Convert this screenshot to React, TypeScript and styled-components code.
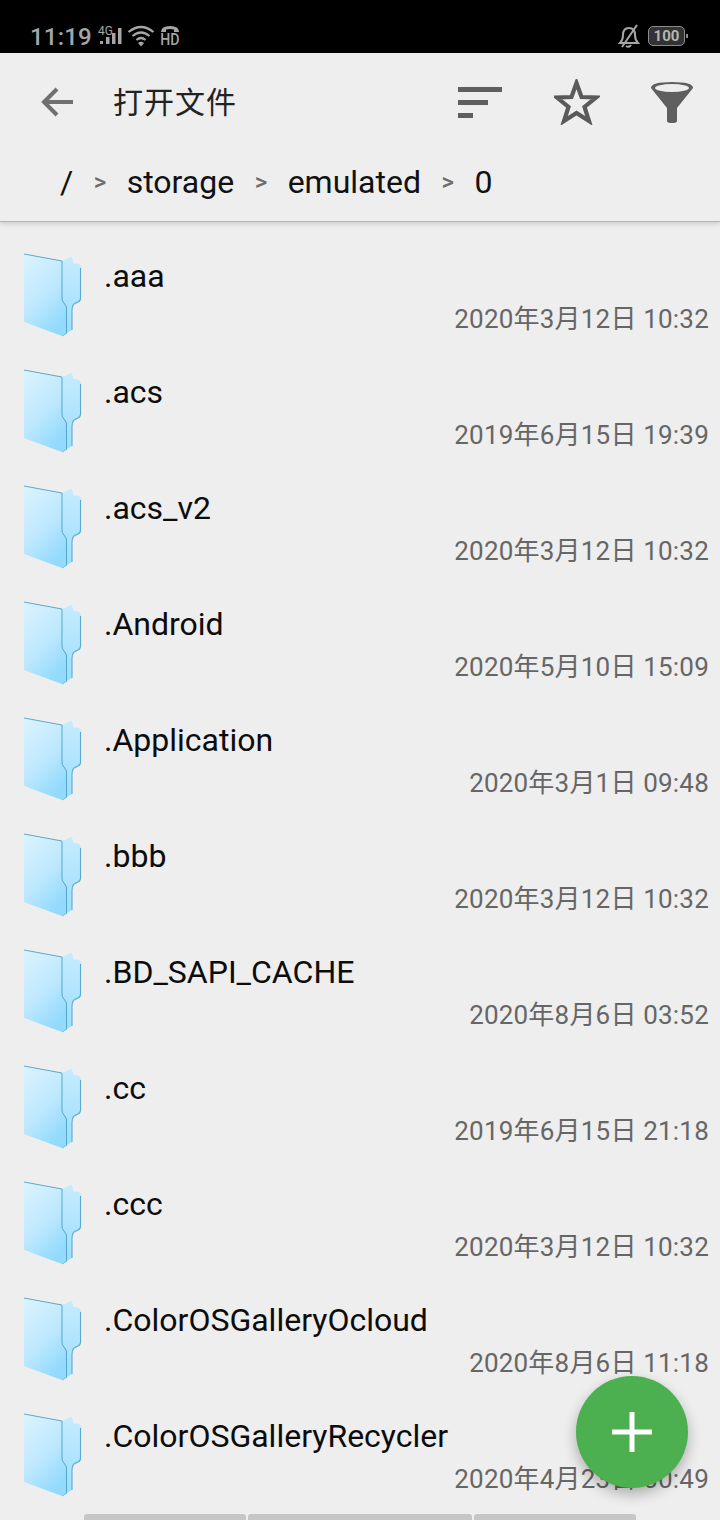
import styled, {createGlobalStyle} from "styled-components";

const GlobalStyle = createGlobalStyle`
    html, body {
        margin: 0;
        padding: 0;
        background: #eeeeee;
    }
    body {
        font-family: Roboto, "Noto Sans CJK SC", sans-serif;
    }
`;

const Page = styled.div`
    position: relative;
    width: 720px;
    height: 1520px;
    overflow: hidden;
    background: #eeeeee;
`;

const StatusBar = styled.div`
    height: 53px;
    background: #000;
    color: #a6a6a6;
    display: flex;
    align-items: flex-end;
    padding: 0 35px 5px 30px;
    box-sizing: border-box;
`;

const Clock = styled.span`
    font-size: 24px;
    font-weight: 500;
    line-height: 28px;
    letter-spacing: 0.2px;
    margin-bottom: -3px;
`;

const NetworkGroup = styled.div`
    display: flex;
    align-items: center;
    height: 24px;
    margin-left: 6px;
    gap: 5px;
`;

const Signal = styled.div`
    position: relative;
    width: 24px;
    height: 24px;
`;

const SignalLabel = styled.span`
    position: absolute;
    left: 0;
    top: 1px;
    font-size: 12px;
    line-height: 12px;
`;

const Call = styled.div`
    display: flex;
    flex-direction: column;
    align-items: center;
    width: 20px;
`;

const CallLabel = styled.span`
    font-size: 16px;
    font-weight: 500;
    line-height: 14px;
    transform: scaleX(0.88);
`;

const StatusRight = styled.div`
    margin-left: auto;
    display: flex;
    align-items: center;
    height: 24px;
    gap: 8px;
`;

const Battery = styled.div`
    position: relative;
    width: 37px;
    height: 20px;
    box-sizing: border-box;
    border: 1px solid #8c8c8c;
    border-radius: 5px;
    background: #333;
    color: #b5b5b5;
    font-size: 15px;
    font-weight: 700;
    line-height: 18px;
    text-align: center;

    &::after {
        content: "";
        position: absolute;
        right: -4px;
        top: 7px;
        width: 2px;
        height: 4px;
        background: #8c8c8c;
    }
`;

const AppBar = styled.header`
    position: relative;
    background: #eeeeee;
    border-bottom: 1px solid #b4b4b4;
    box-shadow: 0 2px 5px rgba(0, 0, 0, 0.14);
`;

const Toolbar = styled.div`
    height: 97px;
    display: flex;
    align-items: center;
    padding: 0 26px 0 38px;
`;

const BackIcon = styled.svg`
    width: 36px;
    height: 34px;
    flex: none;
`;

const Title = styled.h1`
    margin: 0 0 4px 39px;
    font-size: 30px;
    font-weight: 400;
    color: #222;
    letter-spacing: 1px;
`;

const Actions = styled.div`
    margin-left: auto;
    display: flex;
    align-items: center;
    gap: 50px;
`;

const ActionIcon = styled.svg<{$w: number}>`
    width: ${(p) => p.$w}px;
    height: 46px;
    display: block;
`;

const Breadcrumb = styled.nav`
    height: 71px;
    display: flex;
    align-items: center;
    padding: 0 0 7px 60px;
    box-sizing: border-box;
    font-size: 32px;
    color: #111;
`;

const Separator = styled.span`
    font-size: 24px;
    font-weight: 500;
    color: #6e6e6e;
    margin: 0 20.500px;
`;

const List = styled.ul`
    list-style: none;
    margin: 0;
    padding: 0;
`;

const Row = styled.li`
    height: 116px;
    display: flex;
    padding: 0 11px 0 22px;
    box-sizing: border-box;
`;

const FolderIcon = styled.svg`
    width: 60px;
    height: 86px;
    margin-top: 30px;
    flex: none;
`;

const RowText = styled.div`
    flex: 1;
    display: flex;
    flex-direction: column;
    margin-left: 22px;
    padding-top: 35px;
`;

const Name = styled.div`
    font-size: 32px;
    line-height: 38px;
    color: #0c0c0c;
`;

const Modified = styled.div`
    align-self: flex-end;
    margin-top: 7px;
    font-size: 26px;
    letter-spacing: 0.2px;
    line-height: 34px;
    color: #666;
`;

const Fab = styled.button`
    position: absolute;
    left: 576px;
    top: 1376px;
    width: 112px;
    height: 112px;
    padding: 0;
    border: none;
    border-radius: 50%;
    background: #4caf50;
    box-shadow: 0 6px 14px rgba(0, 0, 0, 0.28);
    display: flex;
    align-items: center;
    justify-content: center;
`;

const TabStrip = styled.div`
    position: absolute;
    left: 84px;
    bottom: 0;
    height: 6px;
    display: flex;
    gap: 2px;
`;

const TabPiece = styled.div<{$w: number}>`
    width: ${(p) => p.$w}px;
    background: #c6c6c6;
    border-radius: 3px 3px 0 0;
`;

const Folder = () => (
    <FolderIcon viewBox="22 252 60 86">
        <defs>
            <linearGradient id="front" x1="0" y1="0" x2="0.55" y2="1">
                <stop offset="0" stopColor="#dcf3fe" />
                <stop offset="0.6" stopColor="#bde8fe" />
                <stop offset="1" stopColor="#93dafd" />
            </linearGradient>
            <linearGradient id="back" x1="0" y1="0" x2="0" y2="1">
                <stop offset="0" stopColor="#c6ebfe" />
                <stop offset="1" stopColor="#9adefd" />
            </linearGradient>
        </defs>
        <path d="M62 261 L71 257 Q73 258 73 263 L79 264 Q81 265 81 268 L81 298 Q81 301 78 302 L74 304 Q72 306 72 310 L72 330 L62 336 Z" fill="url(#back)" />
        <path d="M24 254 L62 261 L62 298 Q62 301 64 303 L67 307 L67 333 L62 336 L24 322 Z" fill="url(#front)" />
        <path d="M24 254 L62 261 L62 298 Q62 301 64 303 L66.500 307 L66.500 333" fill="none" stroke="#4f9fc6" strokeWidth="0.900" />
        <path d="M80.500 268 L80.500 298 Q80.500 301 78 302 L74 304 Q72 306 72 310 L72 330" fill="none" stroke="#5ba9cf" strokeWidth="1.100" />
        <path d="M67 333 L62 336" fill="none" stroke="#6fbde0" strokeWidth="1" />
    </FolderIcon>
);

const files = [
    [".aaa", "2020年3月12日 10:32"],
    [".acs", "2019年6月15日 19:39"],
    [".acs_v2", "2020年3月12日 10:32"],
    [".Android", "2020年5月10日 15:09"],
    [".Application", "2020年3月1日 09:48"],
    [".bbb", "2020年3月12日 10:32"],
    [".BD_SAPI_CACHE", "2020年8月6日 03:52"],
    [".cc", "2019年6月15日 21:18"],
    [".ccc", "2020年3月12日 10:32"],
    [".ColorOSGalleryOcloud", "2020年8月6日 11:18"],
    [".ColorOSGalleryRecycler", "2020年4月23日 00:49"],
];

export default function App() {
    return (
        <Page>
            <GlobalStyle />
            <StatusBar>
                <Clock>11:19</Clock>
                <NetworkGroup>
                    <Signal>
                        <SignalLabel>4G</SignalLabel>
                        <svg width="24" height="24" viewBox="0 0 24 24">
                            <rect x="2" y="17" width="3" height="3" fill="#a6a6a6" />
                            <rect x="8" y="13" width="3.500" height="7" fill="#a6a6a6" />
                            <rect x="14" y="9" width="3.500" height="11" fill="#a6a6a6" />
                            <rect x="20" y="4" width="3.500" height="16" fill="#a6a6a6" />
                        </svg>
                    </Signal>
                    <svg width="28" height="22" viewBox="0 0 28 22">
                        <g fill="none" stroke="#a6a6a6" strokeWidth="2.200">
                            <path d="M1.500 7 Q14 -3 26.500 7" />
                            <path d="M5.500 11 Q14 4 22.500 11" />
                            <path d="M9.500 15 Q14 11 18.500 15" />
                        </g>
                        <path d="M11 18 Q14 15.500 17 18 L14 21.500 Z" fill="#a6a6a6" />
                    </svg>
                    <Call>
                        <svg width="20" height="8" viewBox="0 0 20 8">
                            <path d="M1 7 Q1 1 10 1 Q19 1 19 7 L14 7 L14 4.500 Q10 3.500 6 4.500 L6 7 Z" fill="#a6a6a6" />
                        </svg>
                        <CallLabel>HD</CallLabel>
                    </Call>
                </NetworkGroup>
                <StatusRight>
                    <svg width="22" height="24" viewBox="0 0 22 24" fill="none" stroke="#a6a6a6" strokeWidth="2">
                        <path d="M2 19 Q5 16 5 11 Q5 4 11 4 Q17 4 17 11 Q17 16 20 19 Z" />
                        <path d="M8 22 Q11 24 13 21" />
                        <path d="M4 23 L19 1" />
                    </svg>
                    <Battery>100</Battery>
                </StatusRight>
            </StatusBar>
            <AppBar>
                <Toolbar>
                    <BackIcon viewBox="0 0 36 34">
                        <path d="M35 17 H6 M19 4 L6 17 L19 30" fill="none" stroke="#707070" strokeWidth="4" />
                    </BackIcon>
                    <Title>打开文件</Title>
                    <Actions>
                        <ActionIcon $w={46} viewBox="0 0 46 46">
                            <rect x="0" y="8" width="44" height="5" fill="#5f5f5f" />
                            <rect x="0" y="21" width="30" height="5" fill="#5f5f5f" />
                            <rect x="0" y="34" width="15" height="5" fill="#5f5f5f" />
                        </ActionIcon>
                        <ActionIcon $w={46} viewBox="0 0 46 46">
                            <path d="M22.500 4 L27.500 18 L42 18.500 L30.500 28 L35 42 L22.500 34 L10 42 L14.500 28 L3 18.500 L17.500 18 Z" fill="none" stroke="#5a5a5a" strokeWidth="4.200" />
                        </ActionIcon>
                        <ActionIcon $w={44} viewBox="0 0 44 46">
                            <path d="M1 9 Q1 3 22 3 Q43 3 43 9 L27 29 L27 42 Q27 44 22 44 Q17 44 17 42 L17 29 Z" fill="#5f5f5f" />
                            <ellipse cx="22" cy="9" rx="17" ry="4" fill="#eeeeee" />
                        </ActionIcon>
                    </Actions>
                </Toolbar>
                <Breadcrumb>
                    <span>/</span>
                    <Separator>&gt;</Separator>
                    <span>storage</span>
                    <Separator>&gt;</Separator>
                    <span>emulated</span>
                    <Separator>&gt;</Separator>
                    <span>0</span>
                </Breadcrumb>
            </AppBar>
            <List>
                {files.map(([name, date]) => (
                    <Row key={name}>
                        <Folder />
                        <RowText>
                            <Name>{name}</Name>
                            <Modified>{date}</Modified>
                        </RowText>
                    </Row>
                ))}
            </List>
            <Fab>
                <svg width="42" height="42" viewBox="0 0 42 42">
                    <path d="M21 1 V41 M1 21 H41" stroke="#fff" strokeWidth="5" />
                </svg>
            </Fab>
            <TabStrip>
                <TabPiece $w={162} />
                <TabPiece $w={224} />
                <TabPiece $w={162} />
            </TabStrip>
        </Page>
    );
}
